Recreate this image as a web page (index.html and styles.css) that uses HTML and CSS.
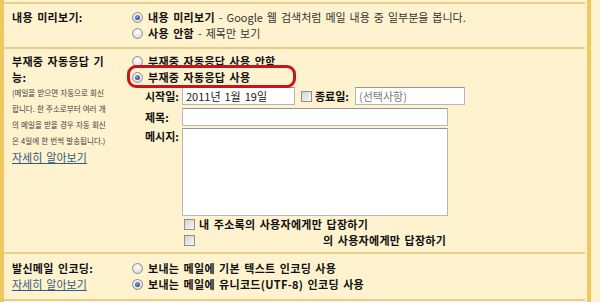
FILE: index.html
```html
<!DOCTYPE html>
<html>
<head>
    <meta charset="UTF-8">
    <title>설정</title>
    <link rel="stylesheet" href="styles.css">
</head>
<body>
    <div class="settings">
        <div class="row row-preview">
            <div class="label"><b>내용 미리보기:</b></div>
            <div class="value">
                <div class="opt"><span class="radio on"></span><b>내용 미리보기</b><span class="desc"> - Google 웹 검색처럼 메일 내용 중 일부분을 봅니다.</span></div>
                <div class="opt"><span class="radio"></span><b>사용 안함</b><span class="desc"> - 제목만 보기</span></div>
            </div>
        </div>

        <div class="row row-vacation">
            <div class="label">
                <div class="title"><b>부재중 자동응답 기능:</b></div>
                <div class="note">(메일을 받으면 자동으로 회신<br>합니다. 한 주소로부터 여러 개<br>의 메일을 받을 경우 자동 회신<br>은 4일에 한 번씩 발송됩니다.)</div>
                <a class="more" href="#">자세히 알아보기</a>
            </div>
            <div class="value">
                <div class="opt"><span class="radio"></span><b>부재중 자동응답 사용 안함</b></div>
                <div class="opt picked"><span class="radio on"></span><b>부재중 자동응답 사용</b><span class="highlight"></span></div>

                <div class="field field-date">
                    <span class="field-name">시작일:</span>
                    <input type="text" class="box date-start" value="2011년 1월 19일">
                    <span class="check"></span>
                    <span class="field-name end">종료일:</span>
                    <input type="text" class="box date-end" placeholder="(선택사항)">
                </div>
                <div class="field field-subject">
                    <span class="field-name">제목:</span>
                    <input type="text" class="box subject">
                </div>
                <div class="field field-message">
                    <span class="field-name">메시지:</span>
                    <textarea class="box message"></textarea>
                </div>

                <div class="check-row"><span class="check"></span><b>내 주소록의 사용자에게만 답장하기</b></div>
                <div class="check-row"><span class="check"></span><span class="domain"></span><b>의 사용자에게만 답장하기</b></div>
            </div>
        </div>

        <div class="row row-encoding">
            <div class="label">
                <div class="title"><b>발신메일 인코딩:</b></div>
                <a class="more" href="#">자세히 알아보기</a>
            </div>
            <div class="value">
                <div class="opt"><span class="radio"></span><b>보내는 메일에 기본 텍스트 인코딩 사용</b></div>
                <div class="opt"><span class="radio on"></span><b>보내는 메일에 유니코드(UTF-8) 인코딩 사용</b></div>
            </div>
        </div>
    </div>
</body>
</html>
```

FILE: styles.css
```css
body {
    margin: 0;
    padding: 0;
    background-color: #fff3cf;
    color: #111111;
    font-family: "Noto Sans CJK KR", sans-serif;
    font-size: 11px;
    word-spacing: 1.5px;
}

b {
    letter-spacing: 0.3px;
}

.settings {
    width: 591px;
    height: 302px;
    padding-top: 2px;
    box-sizing: border-box;
    border-left: 4px solid #f0c862;
    border-right: 4px solid #f0c862;
}

.row {
    display: grid;
    grid-template-columns: 126px 1fr;
    margin-right: 2px;
    border-top: 2px solid #e9d089;
}

.row-preview {
    padding: 5px 0 6px;
}

.row-vacation {
    padding: 4px 0 4px;
}

.row-encoding {
    padding: 6px 0 7px;
    border-bottom: 2px solid #e9d089;
}

.label {
    padding-left: 8px;
    padding-right: 26px;
    line-height: 16px;
}

.note {
    font-size: 7.5px;
    line-height: 16px;
    color: #3c3c3c;
    white-space: nowrap;
    word-spacing: 0.5px;
}

.more {
    color: #2f5a7e;
    text-decoration: underline;
}

.value {
    position: relative;
}

.opt {
    display: flex;
    align-items: center;
    height: 16px;
    white-space: nowrap;
}

.picked {
    position: relative;
}

.desc {
    color: #333333;
    white-space: pre;
}

.radio {
    position: relative;
    width: 9px;
    height: 9px;
    margin: 0 5px 0 2px;
    border: 1px solid #8c8c8c;
    border-radius: 50%;
    background: radial-gradient(circle at 50% 35%, #ffffff, #d2d2d2);
}

.radio.on::after {
    content: "";
    position: absolute;
    top: 2px;
    left: 2px;
    width: 5px;
    height: 5px;
    border-radius: 50%;
    background: radial-gradient(circle at 40% 35%, #7f9fd6, #1b3470);
}

.highlight {
    position: absolute;
    top: -4px;
    left: -3px;
    width: 169px;
    height: 23px;
    box-sizing: border-box;
    border: 3px solid #c8141c;
    border-radius: 9px;
}

.field {
    display: flex;
    align-items: center;
    padding-left: 15px;
}

.field-date {
    margin-top: 2px;
}

.field-subject {
    margin-top: 3px;
}

.field-message {
    margin-top: 2px;
    align-items: flex-start;
}

.field-name {
    width: 37px;
    font-weight: bold;
    line-height: 16px;
}

.field-name.end {
    width: 40px;
    margin-left: 3px;
}

.box {
    box-sizing: border-box;
    margin: 0;
    padding: 0 3px;
    border: 1px solid #b3b8bf;
    border-top-color: #8f959c;
    background-color: #ffffff;
    color: #222222;
    font-family: "Noto Sans CJK KR", sans-serif;
    font-size: 11px;
    word-spacing: 1.5px;
    outline: none;
}

.box::placeholder {
    color: #7a7a7a;
}

.date-start {
    width: 113px;
    height: 18px;
}

.date-end {
    width: 110px;
    height: 18px;
}

.subject {
    width: 266px;
    height: 18px;
}

.message {
    width: 266px;
    height: 88px;
    resize: none;
}

.check {
    display: inline-block;
    width: 9px;
    height: 9px;
    border: 1px solid #8f8f8f;
    background: linear-gradient(135deg, #d4d4d4, #f6f6f6);
}

.field-date .check {
    margin-left: 6px;
}

.check-row {
    display: flex;
    align-items: center;
    height: 16px;
    padding-left: 54px;
    white-space: nowrap;
}

.check-row .check {
    margin-right: 4px;
}

.domain {
    width: 124px;
}
```
